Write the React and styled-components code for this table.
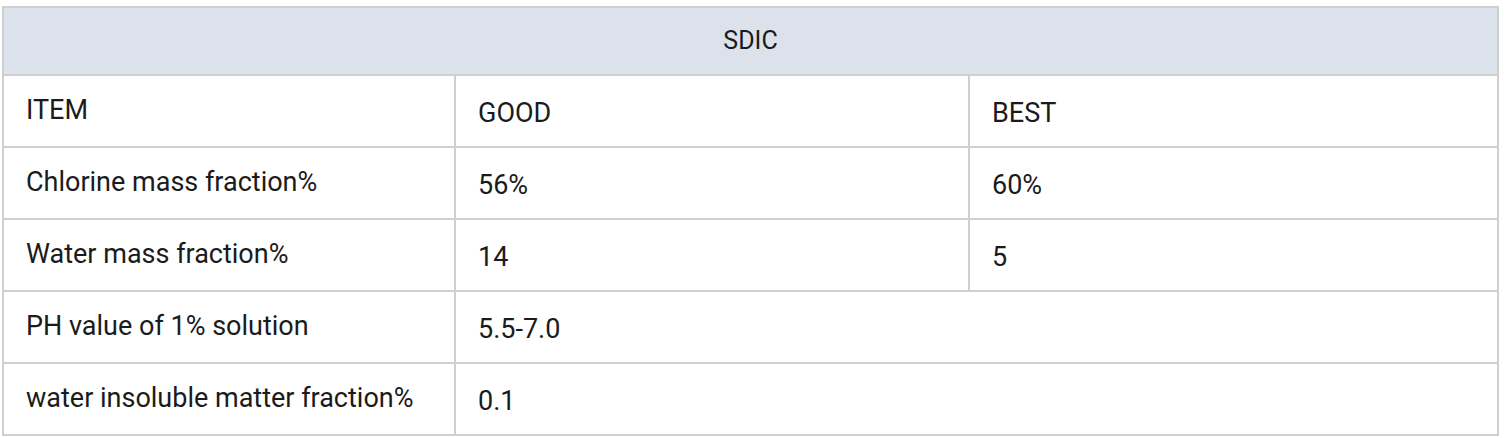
import React from 'react';
import styled, { createGlobalStyle } from 'styled-components';

const GlobalStyle = createGlobalStyle`
  body {
    margin: 0;
    background: #ffffff;
    font-family: Roboto, "Liberation Sans", Arial, sans-serif;
    color: #1b1b1b;
  }
`;

const Wrapper = styled.div`
  padding: 6px 5px 0 2px;
`;

const SpecTable = styled.table`
  width: 1497px;
  border-collapse: collapse;
  table-layout: fixed;
  font-size: 27px;
  line-height: 30px;
`;

const Caption = styled.th`
  height: 66px;
  padding: 0;
  background: #dbe2eb;
  border: 2px solid #cfcfcf;
  font-size: 25px;
  font-weight: 400;
  text-align: center;
  vertical-align: middle;
`;

const Cell = styled.td`
  height: ${p => (p.$first ? '68px' : '66px')};
  padding: ${p => (p.$first ? '0 22px 2px 22px' : '4px 22px 0 22px')};
  border: 2px solid #cfcfcf;
  text-align: left;
  vertical-align: middle;
  white-space: nowrap;
`;

const rows = [
  ['ITEM', 'GOOD', 'BEST'],
  ['Chlorine mass fraction%', '56%', '60%'],
  ['Water mass fraction%', '14', '5'],
  ['PH value of 1% solution', '5.5-7.0'],
  ['water insoluble matter fraction%', '0.1'],
];

export default function App() {
  return (
    <Wrapper>
      <GlobalStyle />
      <SpecTable>
        <colgroup>
          <col style={{ width: 452 }} />
          <col style={{ width: 514 }} />
          <col />
        </colgroup>
        <thead>
          <tr>
            <Caption colSpan={3}>SDIC</Caption>
          </tr>
        </thead>
        <tbody>
          {rows.map((row, i) => (
            <tr key={i}>
              {row.map((text, j) => (
                <Cell
                  key={j}
                  $first={j === 0}
                  colSpan={row.length === 2 && j === 1 ? 2 : 1}
                >
                  {text}
                </Cell>
              ))}
            </tr>
          ))}
        </tbody>
      </SpecTable>
    </Wrapper>
  );
}
